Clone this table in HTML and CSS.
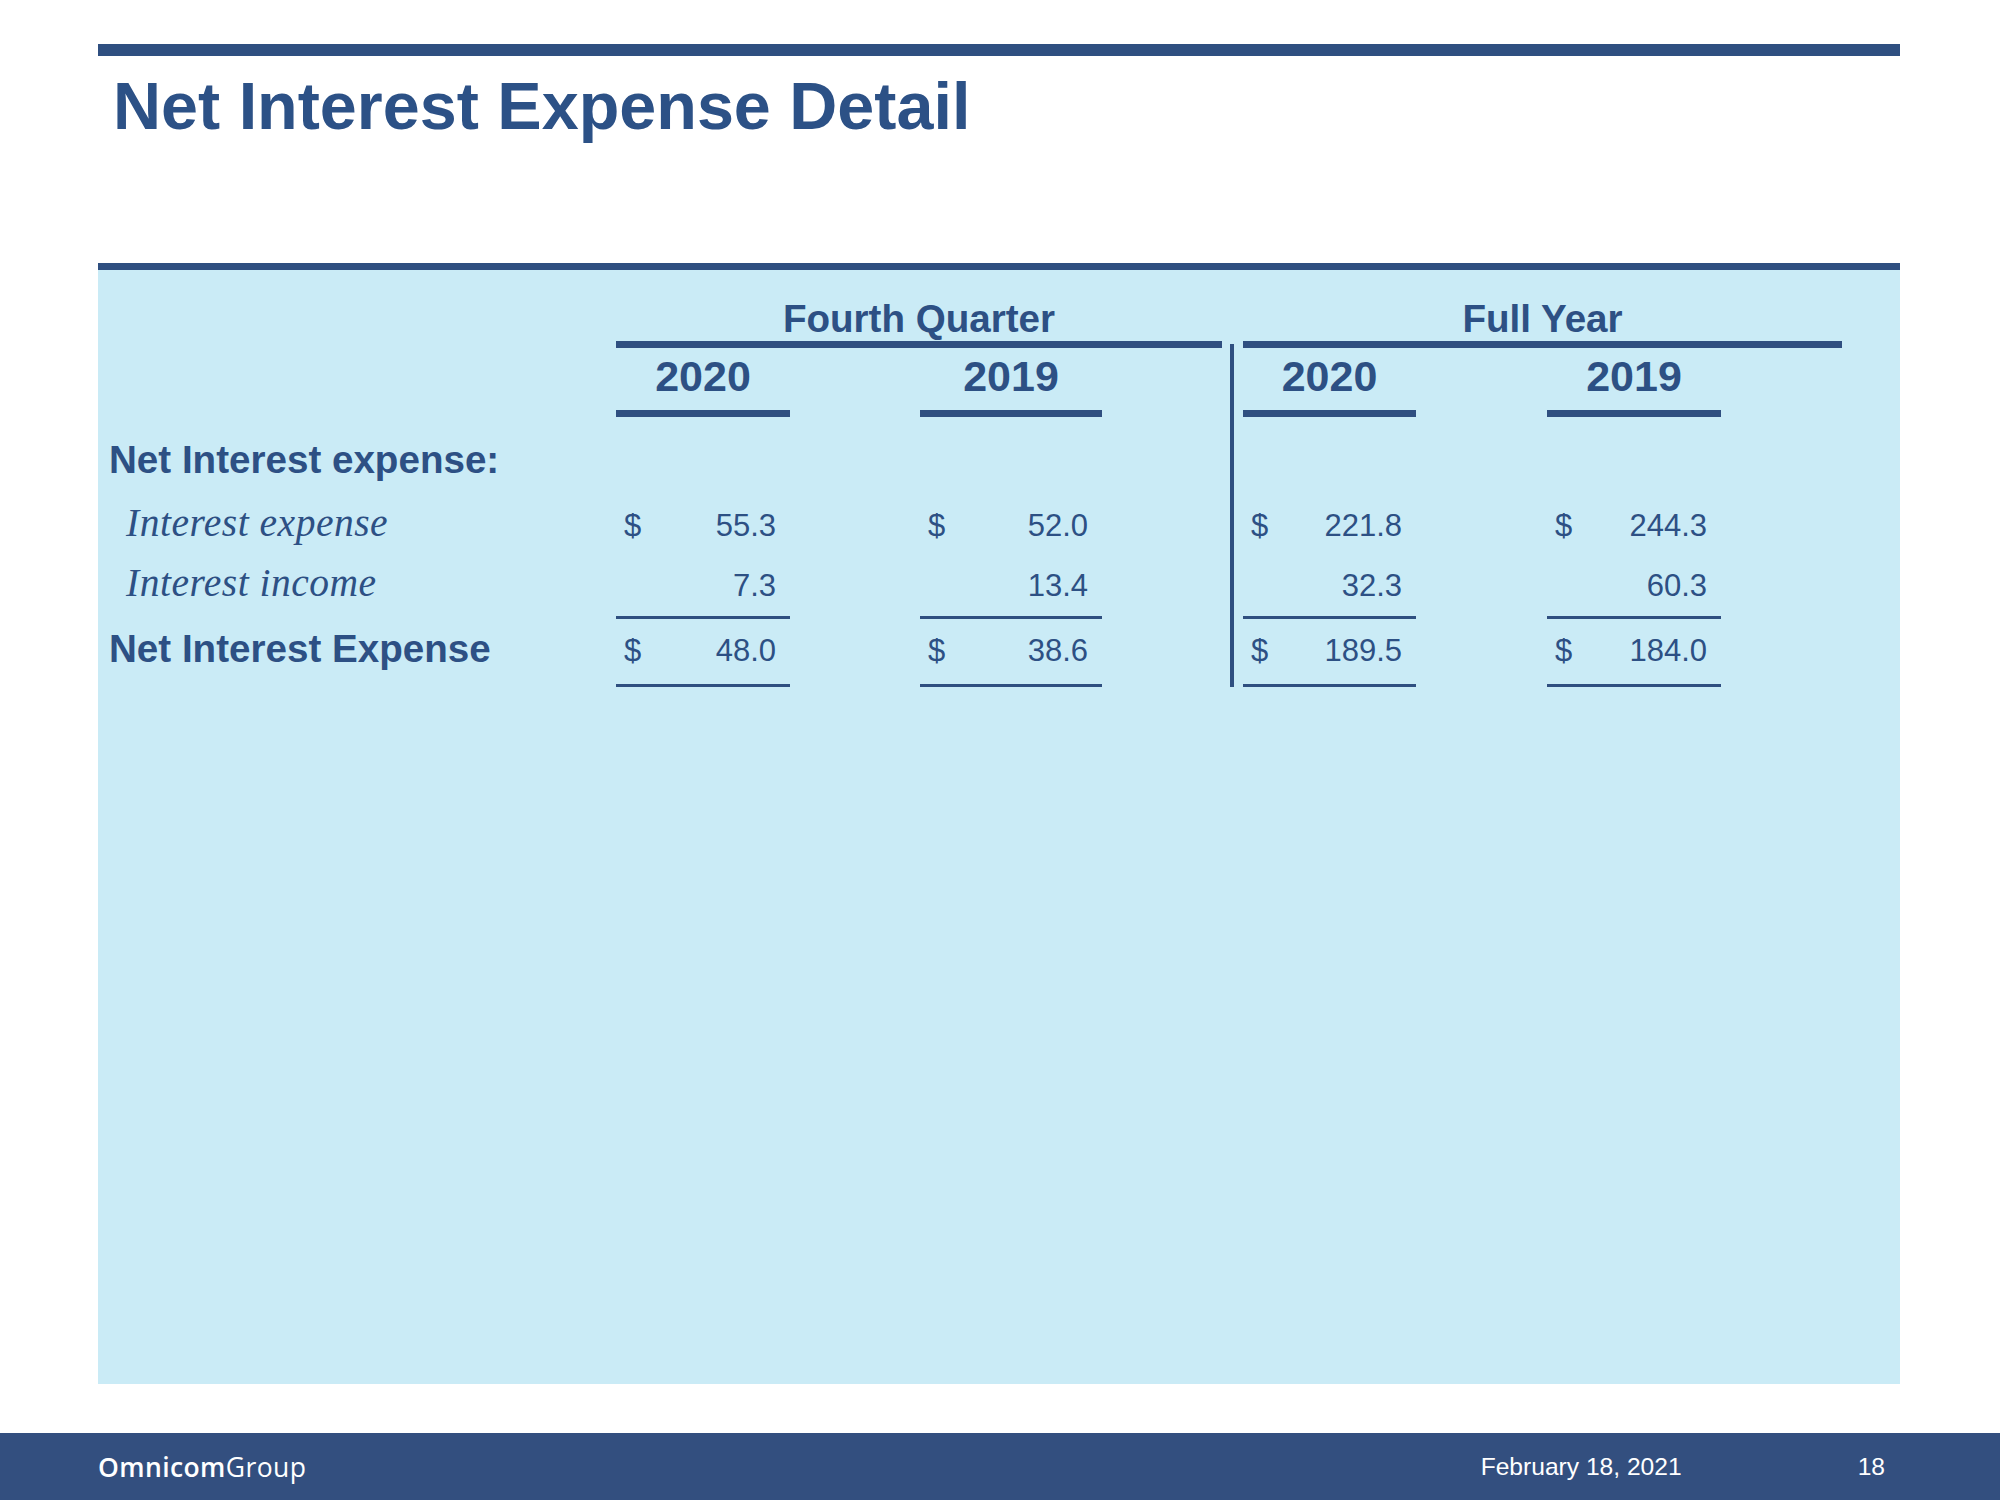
FILE: index.html
```html
<!DOCTYPE html>
<html lang="en">
<head>
<meta charset="utf-8">
<title>Net Interest Expense Detail</title>
<link rel="stylesheet" href="styles.css">
</head>
<body>
<div class="slide">
  <div class="top-rule"></div>
  <h1 class="title">Net Interest Expense Detail</h1>

  <section class="panel">
    <div class="table">
      <div class="grp grp-q r1">Fourth Quarter</div>
      <div class="grp grp-y r1">Full Year</div>
      <div class="divider"></div>

      <div class="yr c1 r2">2020</div>
      <div class="yr c2 r2">2019</div>
      <div class="yr c3 r2">2020</div>
      <div class="yr c4 r2">2019</div>

      <div class="lab lab-head r3">Net Interest expense:</div>

      <div class="lab lab-item r4">Interest expense</div>
      <div class="num c1 r4"><span>$</span><span>55.3</span></div>
      <div class="num c2 r4"><span>$</span><span>52.0</span></div>
      <div class="num c3 r4"><span>$</span><span>221.8</span></div>
      <div class="num c4 r4"><span>$</span><span>244.3</span></div>

      <div class="lab lab-item r5">Interest income</div>
      <div class="num sub c1 r5"><span class="v">7.3</span></div>
      <div class="num sub c2 r5"><span class="v">13.4</span></div>
      <div class="num sub c3 r5"><span class="v">32.3</span></div>
      <div class="num sub c4 r5"><span class="v">60.3</span></div>

      <div class="lab lab-total r6">Net Interest Expense</div>
      <div class="num tot c1 r6"><span>$</span><span>48.0</span></div>
      <div class="num tot c2 r6"><span>$</span><span>38.6</span></div>
      <div class="num tot c3 r6"><span>$</span><span>189.5</span></div>
      <div class="num tot c4 r6"><span>$</span><span>184.0</span></div>
    </div>
  </section>

  <footer class="footer">
    <div class="logo"><span class="logo-a">Omnicom</span><span class="logo-b">Group</span></div>
    <div class="foot-right">
      <span class="date">February 18, 2021</span>
      <span class="page">18</span>
    </div>
  </footer>
</div>
</body>
</html>
```

FILE: styles.css
```css
html, body {
  margin: 0;
  padding: 0;
  background: #ffffff;
}

body {
  font-family: "Liberation Sans", Arial, sans-serif;
  color: #2d5084;
}

.slide {
  width: 2000px;
  height: 1500px;
  display: flex;
  flex-direction: column;
  overflow: hidden;
}

.top-rule {
  margin: 44px 0 0 98px;
  width: 1802px;
  height: 12px;
  background: #2f4f80;
}

.title {
  margin: 13px 0 0 98px;
  padding-left: 15px;
  font-size: 66.5px;
  line-height: 74px;
  font-weight: 700;
  color: #2c5186;
}

.panel {
  margin: 120px 0 0 98px;
  width: 1802px;
  height: 1087px;
  padding-top: 27px;
  background: #caebf6;
  border-top: 7px solid #2f4f80;
}

.table {
  display: grid;
  grid-template-columns: 518px 174px 130px 182px 120px 21px 173px 131px 174px 121px 58px;
  align-items: start;
  color: #2d5084;
}

.r1 { grid-row: 1; }
.r2 { grid-row: 2; }
.r3 { grid-row: 3; }
.r4 { grid-row: 4; }
.r5 { grid-row: 5; }
.r6 { grid-row: 6; }

.c1 { grid-column: 2; }
.c2 { grid-column: 4; }
.c3 { grid-column: 7; }
.c4 { grid-column: 9; }
.lab { grid-column: 1; }

.grp {
  font-size: 38.6px;
  font-weight: 700;
  line-height: 44px;
  text-align: center;
  border-bottom: 7px solid #2f4f80;
}

.grp-q { grid-column: 2 / 6; }
.grp-y { grid-column: 7 / 11; }

.divider {
  grid-column: 6;
  grid-row: 2 / 7;
  align-self: stretch;
  width: 4px;
  margin-left: 8px;
  margin-top: -4px;
  background: #2f4f80;
}

.yr {
  font-size: 43px;
  font-weight: 700;
  line-height: 56px;
  padding-bottom: 6px;
  text-align: center;
  border-bottom: 7px solid #2f4f80;
}

.lab-head {
  font-size: 38.6px;
  font-weight: 700;
  line-height: 44px;
  padding: 21px 0 14px 11px;
}

.lab-item {
  font-family: "Liberation Serif", "Times New Roman", serif;
  font-style: italic;
  font-size: 39.5px;
  letter-spacing: 0.5px;
  line-height: 55px;
  padding-left: 28px;
}

.lab-total {
  font-size: 38.6px;
  font-weight: 700;
  line-height: 60px;
  padding-left: 11px;
}

.num {
  display: flex;
  justify-content: space-between;
  font-size: 31px;
  line-height: 60px;
  padding: 0 14px 0 8px;
}

.num .v {
  margin-left: auto;
}

.num.sub {
  border-bottom: 3px solid #2f4f80;
}

.num.tot {
  line-height: 50px;
  padding-top: 7px;
  padding-bottom: 8px;
  border-bottom: 3px solid #2f4f80;
}

.footer {
  margin-top: auto;
  height: 67px;
  background: #334f7f;
  color: #ffffff;
  display: flex;
  align-items: center;
  padding: 0 115px 0 98px;
}

.logo {
  font-family: "Open Sans", "Noto Sans", sans-serif;
  font-size: 26.5px;
  letter-spacing: 0.4px;
}

.logo-a { font-weight: 600; }
.logo-b { font-weight: 400; }

.foot-right {
  margin-left: auto;
  display: flex;
  align-items: center;
  gap: 176px;
  font-size: 24.6px;
}
```
